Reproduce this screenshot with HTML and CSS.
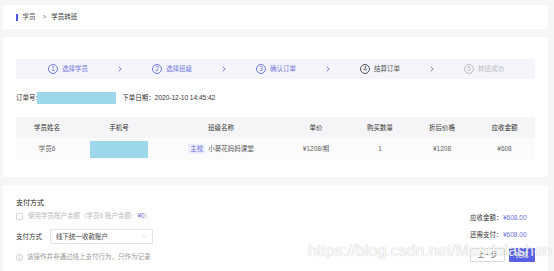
FILE: index.html
```html
<!DOCTYPE html>
<html lang="zh-CN">
<head>
<meta charset="utf-8">
<title>学员转班</title>
<link rel="stylesheet" href="styles.css">
</head>
<body>
<div class="page">
  <div class="card crumb-card">
    <span class="crumb-bar"></span>
    <span class="crumb-link">学员</span>
    <span class="crumb-sep">&gt;</span>
    <span class="crumb-cur">学员转班</span>
  </div>

  <div class="card main-card">
    <div class="steps">
      <div class="step done"><span class="num">1</span><span class="label">选择学员</span></div>
      <svg class="arrow done" viewBox="0 0 4 6"><path d="M0.6 0.6 L3.2 3 L0.6 5.4"/></svg>
      <div class="step done"><span class="num">2</span><span class="label">选择班级</span></div>
      <svg class="arrow done" viewBox="0 0 4 6"><path d="M0.6 0.6 L3.2 3 L0.6 5.4"/></svg>
      <div class="step done"><span class="num">3</span><span class="label">确认订单</span></div>
      <svg class="arrow done" viewBox="0 0 4 6"><path d="M0.6 0.6 L3.2 3 L0.6 5.4"/></svg>
      <div class="step current"><span class="num">4</span><span class="label">结算订单</span></div>
      <svg class="arrow todo" viewBox="0 0 4 6"><path d="M0.6 0.6 L3.2 3 L0.6 5.4"/></svg>
      <div class="step todo"><span class="num">5</span><span class="label">转班成功</span></div>
    </div>

    <div class="order">
      <span>订单号:</span><span class="mask order-mask"></span><span class="date">下单日期：2020-12-10 14:45:42</span>
    </div>

    <table class="tbl">
      <colgroup>
        <col class="c1"><col class="c2"><col class="c3"><col class="c4"><col class="c5"><col class="c6"><col class="c7">
      </colgroup>
      <thead>
        <tr><th>学员姓名</th><th>手机号</th><th>班级名称</th><th>单价</th><th>购买数量</th><th>折后价格</th><th>应收金额</th></tr>
      </thead>
      <tbody>
        <tr>
          <td>学员6</td>
          <td><span class="mask phone-mask"></span></td>
          <td><span class="tag">主校</span><span class="cls">小葵花妈妈课堂</span></td>
          <td>¥1208/期</td>
          <td>1</td>
          <td>¥1208</td>
          <td>¥608</td>
        </tr>
      </tbody>
    </table>
  </div>

  <div class="card pay-card">
    <div class="pay-left">
      <div class="pay-title">支付方式</div>
      <div class="balance"><span class="checkbox"></span><span>使用学员账户余额（学员6 账户余额：<span class="accent">¥0</span>）</span></div>
      <div class="method">
        <span class="method-label">支付方式</span>
        <div class="select"><span>线下统一收款账户</span><svg class="caret" viewBox="0 0 6 4"><path d="M0.5 0.5 L3 3 L5.5 0.5"/></svg></div>
      </div>
      <div class="info">
        <svg class="info-icon" viewBox="0 0 8 8"><circle cx="4" cy="4" r="3.4"/><path d="M4 3.5 V6"/><circle class="dot" cx="4" cy="2.2" r="0.45"/></svg>
        <span>该操作并非通过线上支付行为，只作为记录</span>
      </div>
    </div>
    <div class="pay-right">
      <div class="sum"><span class="sum-label">应收金额：</span><span class="accent">¥608.00</span></div>
      <div class="sum sum2"><span class="sum-label">还需支付：</span><span class="accent">¥608.00</span></div>
      <div class="btns">
        <span class="btn btn-ghost">上一步</span>
        <span class="btn btn-primary">完成</span>
      </div>
    </div>
  </div>
</div>
<div class="watermark">https://blog.csdn.net/Mandalashen</div>
</body>
</html>
```

FILE: styles.css
```css
* { box-sizing: border-box; }

html, body {
  margin: 0;
  padding: 0;
}

body {
  background: #f5f6f8;
  font-family: "Liberation Sans", "Noto Sans CJK SC", sans-serif;
  font-size: 6.5px;
  color: #333;
  width: 554px;
  height: 271px;
  overflow: hidden;
  position: relative;
}

.page {
  padding: 5px 6px 0 3px;
  display: flex;
  flex-direction: column;
  gap: 8px;
}

.card {
  background: #fff;
  border-radius: 2px;
}

/* breadcrumb */
.crumb-card {
  height: 24px;
  display: flex;
  align-items: center;
  padding-left: 13px;
  line-height: 10px;
}
.crumb-bar {
  width: 1.5px;
  height: 7px;
  background: #4b55e3;
  margin-right: 5px;
}
.crumb-link { color: #555; }
.crumb-sep { color: #777; margin: 0 5px 0 7px; }
.crumb-cur { color: #333; }

/* main card */
.main-card {
  height: 140px;
  padding: 22px 13px 0;
}

.steps {
  height: 20px;
  background: #f4f5fb;
  display: flex;
  align-items: center;
  padding-left: 32px;
  gap: 30px;
}
.step {
  width: 40px;
  display: flex;
  align-items: center;
  gap: 4px;
  white-space: nowrap;
  line-height: 10px;
}
.num {
  width: 10px;
  height: 10px;
  flex: none;
  border: 0.8px solid currentColor;
  border-radius: 50%;
  display: flex;
  align-items: center;
  justify-content: center;
  font-size: 6.5px;
}
.step.done { color: #7277e3; }
.step.current { color: #555; }
.step.todo { color: #bcbcbc; }

.arrow {
  width: 4px;
  height: 6px;
  flex: none;
  fill: none;
  stroke-width: 0.9;
}
.arrow.done { stroke: #7277e3; }
.arrow.todo { stroke: #888; }

.order {
  margin-top: 12px;
  height: 13px;
  display: flex;
  align-items: center;
  line-height: 10px;
  color: #333;
}
.mask { display: inline-block; background: #9cd8ea; }
.order-mask { width: 79px; height: 12px; }
.date { margin-left: 6px; }

.tbl {
  margin-top: 13px;
  width: 100%;
  border-collapse: collapse;
  table-layout: fixed;
}
.c1 { width: 62px; }
.c2 { width: 82px; }
.c3 { width: 122px; }
.c4 { width: 68px; }
.c5 { width: 60px; }
.c6 { width: 64px; }
.c7 { width: 61px; }

.tbl th {
  height: 21px;
  padding: 0;
  background: #f5f5f7;
  font-weight: normal;
  color: #333;
  text-align: center;
  line-height: 10px;
}
.tbl td {
  height: 22px;
  padding: 0;
  background: #fbfbfc;
  color: #666;
  text-align: center;
  line-height: 10px;
  white-space: nowrap;
}
.phone-mask {
  width: 58px;
  height: 17px;
  vertical-align: middle;
}
.tag {
  display: inline-block;
  background: #eceefc;
  color: #6b70e0;
  padding: 0 2px;
  line-height: 10px;
  margin-right: 3px;
}
.cls { color: #555; }

/* pay card */
.pay-card {
  height: 86px;
  padding: 13px 13px 0;
  display: flex;
  justify-content: space-between;
  line-height: 10px;
}
.pay-title {
  font-size: 7px;
  color: #222;
}
.balance {
  margin-top: 3px;
  display: flex;
  align-items: center;
  gap: 5px;
  color: #bbb;
}
.checkbox {
  width: 7px;
  height: 7px;
  border: 0.8px solid #d9d9d9;
  border-radius: 1px;
  background: #fff;
}
.accent { color: #6b70e0; }

.method {
  margin-top: 8px;
  display: flex;
  align-items: center;
}
.method-label {
  width: 34px;
  color: #333;
}
.select {
  width: 103px;
  height: 15px;
  border: 0.8px solid #e3e3e3;
  border-radius: 1px;
  display: flex;
  align-items: center;
  justify-content: space-between;
  padding: 0 5px 0 5px;
  color: #444;
}
.caret {
  width: 5px;
  height: 3px;
  fill: none;
  stroke: #bbb;
  stroke-width: 0.8;
}

.info {
  margin-top: 8px;
  display: flex;
  align-items: center;
  gap: 4px;
  color: #999;
}
.info-icon {
  width: 7px;
  height: 7px;
  fill: none;
  stroke: #aaa;
  stroke-width: 0.7;
}
.info-icon .dot { fill: #aaa; stroke: none; }

.pay-right {
  width: 65px;
  padding-top: 15px;
  color: #333;
}
.sum { white-space: nowrap; }
.sum-label { display: inline-block; width: 33px; }
.sum2 { margin-top: 7px; }

.btns {
  margin-top: 8px;
  display: flex;
  gap: 4px;
}
.btn {
  height: 14px;
  display: flex;
  align-items: center;
  justify-content: center;
  border-radius: 1px;
}
.btn-ghost {
  width: 35px;
  border: 0.8px solid #d9d9d9;
  color: #444;
  background: #fff;
}
.btn-primary {
  width: 26px;
  background: #5a62e4;
  color: #fff;
}

/* image watermark overlay */
.watermark {
  position: absolute;
  left: 308px;
  top: 241px;
  font-family: "Liberation Sans", sans-serif;
  font-size: 16px;
  line-height: 20px;
  color: rgba(255, 255, 255, 0.9);
  text-shadow: 0 0 1px rgba(0, 0, 0, 0.28);
  white-space: nowrap;
  pointer-events: none;
}
```
